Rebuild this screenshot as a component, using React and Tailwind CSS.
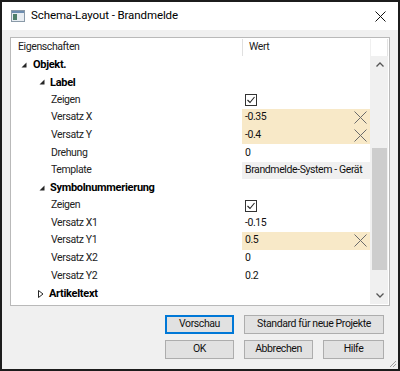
const rows = [
  { name: 'Objekt.', level: 0, group: 'open' },
  { name: 'Label', level: 1, group: 'open' },
  { name: 'Zeigen', check: true },
  { name: 'Versatz X', value: '-0.35', edited: true },
  { name: 'Versatz Y', value: '-0.4', edited: true },
  { name: 'Drehung', value: '0' },
  { name: 'Template', value: 'Brandmelde-System - Gerät', readonly: true },
  { name: 'Symbolnummerierung', level: 1, group: 'open' },
  { name: 'Zeigen', check: true },
  { name: 'Versatz X1', value: '-0.15' },
  { name: 'Versatz Y1', value: '0.5', edited: true },
  { name: 'Versatz X2', value: '0' },
  { name: 'Versatz Y2', value: '0.2' },
  { name: 'Artikeltext', level: 1, group: 'closed' },
];

function Expander({ open }) {
  return open ? (
    <svg width="6" height="6" viewBox="0 0 6 6" className="shrink-0">
      <polygon points="5.5,0.5 5.5,5.5 0.5,5.5" fill="#262626" />
    </svg>
  ) : (
    <svg width="6" height="8" viewBox="0 0 6 8" className="shrink-0">
      <polygon points="0.5,0.5 5,4 0.5,7.5" fill="none" stroke="#262626" strokeWidth="1" />
    </svg>
  );
}

function ResetX() {
  return (
    <svg width="13" height="13" viewBox="0 0 13 13" className="shrink-0 mr-px">
      <path d="M0.5 0.5 L12.5 12.5 M12.5 0.5 L0.5 12.5" stroke="#6b6b6b" strokeWidth="1" />
    </svg>
  );
}

function CheckBox() {
  return (
    <div className="w-[12px] h-[12px] border border-[#333] bg-white flex items-center justify-center">
      <svg width="10" height="10" viewBox="0 0 10 10">
        <path d="M1.5 5 L4 7.5 L8.5 2" fill="none" stroke="#222" strokeWidth="1.1" />
      </svg>
    </div>
  );
}

function Row({ row }) {
  if (row.group) {
    return (
      <div className="h-[17.6px] flex items-center">
        <div className={`flex items-center ${row.level === 0 ? 'pl-[9px] gap-[6px]' : row.group === 'open' ? 'pl-[27px] gap-[5px]' : 'pl-[26px] gap-[5px]'}`}>
          <Expander open={row.group === 'open'} />
          <span className="font-bold text-black text-[11px] tracking-[-0.3px]">{row.name}</span>
        </div>
      </div>
    );
  }
  return (
    <div className="h-[17.6px] flex">
      <div className="w-[230px] shrink-0 pl-[39px] flex items-center text-[#222]">{row.name}</div>
      <div
        className={`flex-1 min-w-0 overflow-hidden flex items-center pl-[3px] pr-[2px] ${row.edited ? 'bg-[#f8e9c8]' : row.readonly ? 'bg-[#f0f0f0]' : ''}`}
      >
        {row.check ? <CheckBox /> : <span className="flex-1 text-[#111]">{row.value}</span>}
        {row.edited && <ResetX />}
      </div>
    </div>
  );
}

function Btn({ children, className = '', primary }) {
  return (
    <button
      className={`h-[19px] flex items-center justify-center bg-[#e1e1e1] text-[#111] ${primary ? 'border-2 border-[#0078d7]' : 'border border-[#adadad]'} ${className}`}
    >
      {children}
    </button>
  );
}

export default function App() {
  return (
    <div className="w-[400px] h-[371px] bg-[#f0f0f0] border-2 border-[#1c1c1c] flex flex-col font-['Roboto',sans-serif] text-[10.5px] tracking-[-0.4px] leading-none whitespace-nowrap relative">
      <div className="h-[28px] bg-white flex items-center pl-[9px] pr-[9px] shrink-0">
        <svg width="14" height="12" viewBox="0 0 14 12" className="mr-[6px]">
          <rect x="0.5" y="0.5" width="13" height="11" fill="#e8edf2" stroke="#8a9aa8" />
          <rect x="1" y="1" width="12" height="2" fill="#6d8db0" />
          <rect x="2" y="4" width="4" height="6" fill="#4f7f6a" />
        </svg>
        <span className="text-[11.5px] tracking-[-0.1px] text-black">Schema-Layout - Brandmelde</span>
        <svg width="11" height="11" viewBox="0 0 11 11" className="ml-auto mr-[3px]">
          <path d="M0.5 0.5 L10.5 10.5 M10.5 0.5 L0.5 10.5" stroke="#111" strokeWidth="1" />
        </svg>
      </div>

      <div className="px-[8px] pt-[7px] flex flex-col">
        <div className="h-[269px] border border-[#b9b9b9] bg-white flex p-px">
          <div className="flex-1 min-w-0 flex flex-col">
            <div className="h-[17px] flex items-center shrink-0">
              <div className="w-[230px] shrink-0 pl-[6px] text-[#222]">Eigenschaften</div>
              <div className="flex-1 h-full border-l border-[#e0e0e0] pl-[6px] flex items-center text-[#222]">Wert</div>
            </div>
            {rows.map((r, i) => (
              <Row key={i} row={r} />
            ))}
          </div>
          <div className="w-[18px] shrink-0 flex flex-col border-l border-[#f0f0f0]">
            <div className="h-[17px] bg-white border-r border-[#e3e3e3]" />
            <div className="flex-1 bg-[#f0f0f0] flex flex-col items-center">
              <div className="h-[17px] flex items-center justify-center">
                <svg width="8" height="5" viewBox="0 0 8 5">
                  <path d="M0.5 4.5 L4 1 L7.5 4.5" fill="none" stroke="#555" strokeWidth="1.3" />
                </svg>
              </div>
              <div className="h-[75px]" />
              <div className="w-[15px] h-[122px] bg-[#cdcdcd]" />
              <div className="flex-1" />
              <div className="h-[17px] flex items-center justify-center">
                <svg width="8" height="5" viewBox="0 0 8 5">
                  <path d="M0.5 0.5 L4 4 L7.5 0.5" fill="none" stroke="#555" strokeWidth="1.3" />
                </svg>
              </div>
            </div>
          </div>
        </div>

        <div className="flex flex-col gap-[6px] pt-[9px] pl-[155px] pr-[6px]">
          <div className="flex gap-[10px]">
            <Btn primary className="w-[69px]">Vorschau</Btn>
            <Btn className="flex-1">Standard für neue Projekte</Btn>
          </div>
          <div className="flex gap-[10px]">
            <Btn className="w-[69px]">OK</Btn>
            <Btn className="w-[69px]">Abbrechen</Btn>
            <Btn className="flex-1">Hilfe</Btn>
          </div>
        </div>
      </div>

      <svg width="10" height="10" viewBox="0 0 10 10" className="absolute right-[1px] bottom-[1px]">
        <path d="M9 3 L3 9 M9 6 L6 9" stroke="#a0a0a0" strokeWidth="1" />
      </svg>
    </div>
  );
}
